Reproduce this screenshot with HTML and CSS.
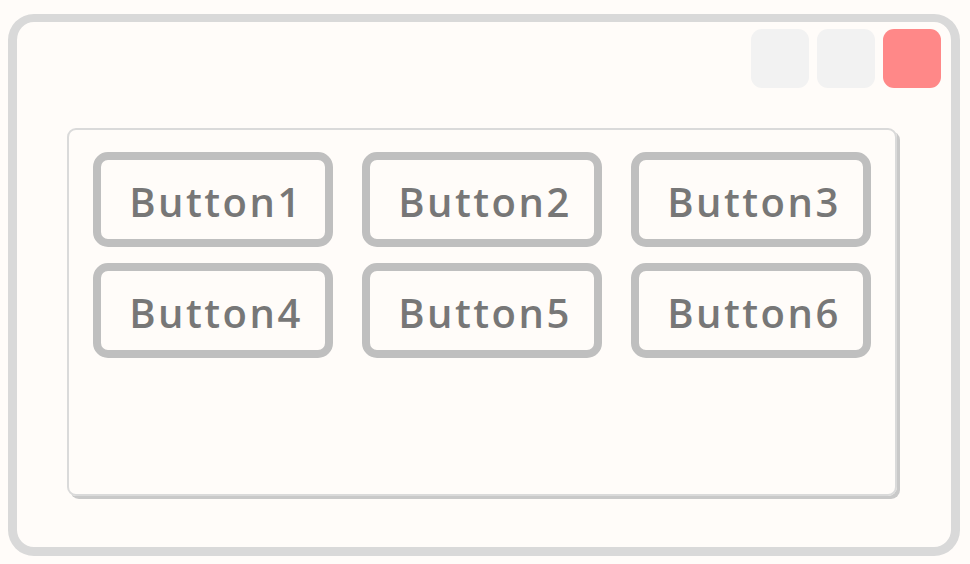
FILE: index.html
```html
<!DOCTYPE html>
<html>
<head>
<meta charset="utf-8">
<link rel="stylesheet" href="styles.css">
</head>
<body>
<div class="window">
  <div class="titlebar">
    <div class="ctrl"></div>
    <div class="ctrl"></div>
    <div class="ctrl close"></div>
  </div>
  <div class="panel">
    <div class="btn">Button1</div>
    <div class="btn">Button2</div>
    <div class="btn">Button3</div>
    <div class="btn">Button4</div>
    <div class="btn">Button5</div>
    <div class="btn">Button6</div>
  </div>
</div>
</body>
</html>
```
FILE: styles.css
```css
html, body {
  margin: 0;
  padding: 0;
  background: #fffcf9;
}
body {
  width: 970px;
  height: 564px;
  overflow: hidden;
}
.window {
  box-sizing: border-box;
  width: 952px;
  height: 542px;
  margin: 14px 0 0 8px;
  border: 9px solid #d9d9d9;
  border-top-width: 8px;
  border-radius: 26px;
  background: #fffcf9;
  display: flex;
  flex-direction: column;
}
.titlebar {
  display: flex;
  justify-content: flex-end;
  gap: 8px;
  padding: 7px 10px 0 0;
}
.ctrl {
  width: 58px;
  height: 59px;
  border-radius: 11px;
  background: #f2f2f2;
}
.ctrl.close {
  background: #ff8888;
}
.panel {
  box-sizing: border-box;
  width: 830px;
  height: 368px;
  margin: 40px 0 0 50px;
  border: 2px solid #dadada;
  border-radius: 9px;
  box-shadow: 3px 3px 0 #c9c9c9;
  padding: 22px 0 0 24px;
  display: grid;
  grid-template-columns: repeat(3, 240px);
  grid-auto-rows: 95px;
  column-gap: 29px;
  row-gap: 16px;
  align-content: start;
}
.btn {
  box-sizing: border-box;
  border: 8.5px solid #bfbfbf;
  border-radius: 15px;
  display: flex;
  align-items: center;
  justify-content: center;
  padding-top: 4px;
  padding-left: 6px;
  font-family: "Open Sans", sans-serif;
  font-weight: 600;
  font-size: 40px;
  letter-spacing: 2.5px;
  color: #777777;
}
```
